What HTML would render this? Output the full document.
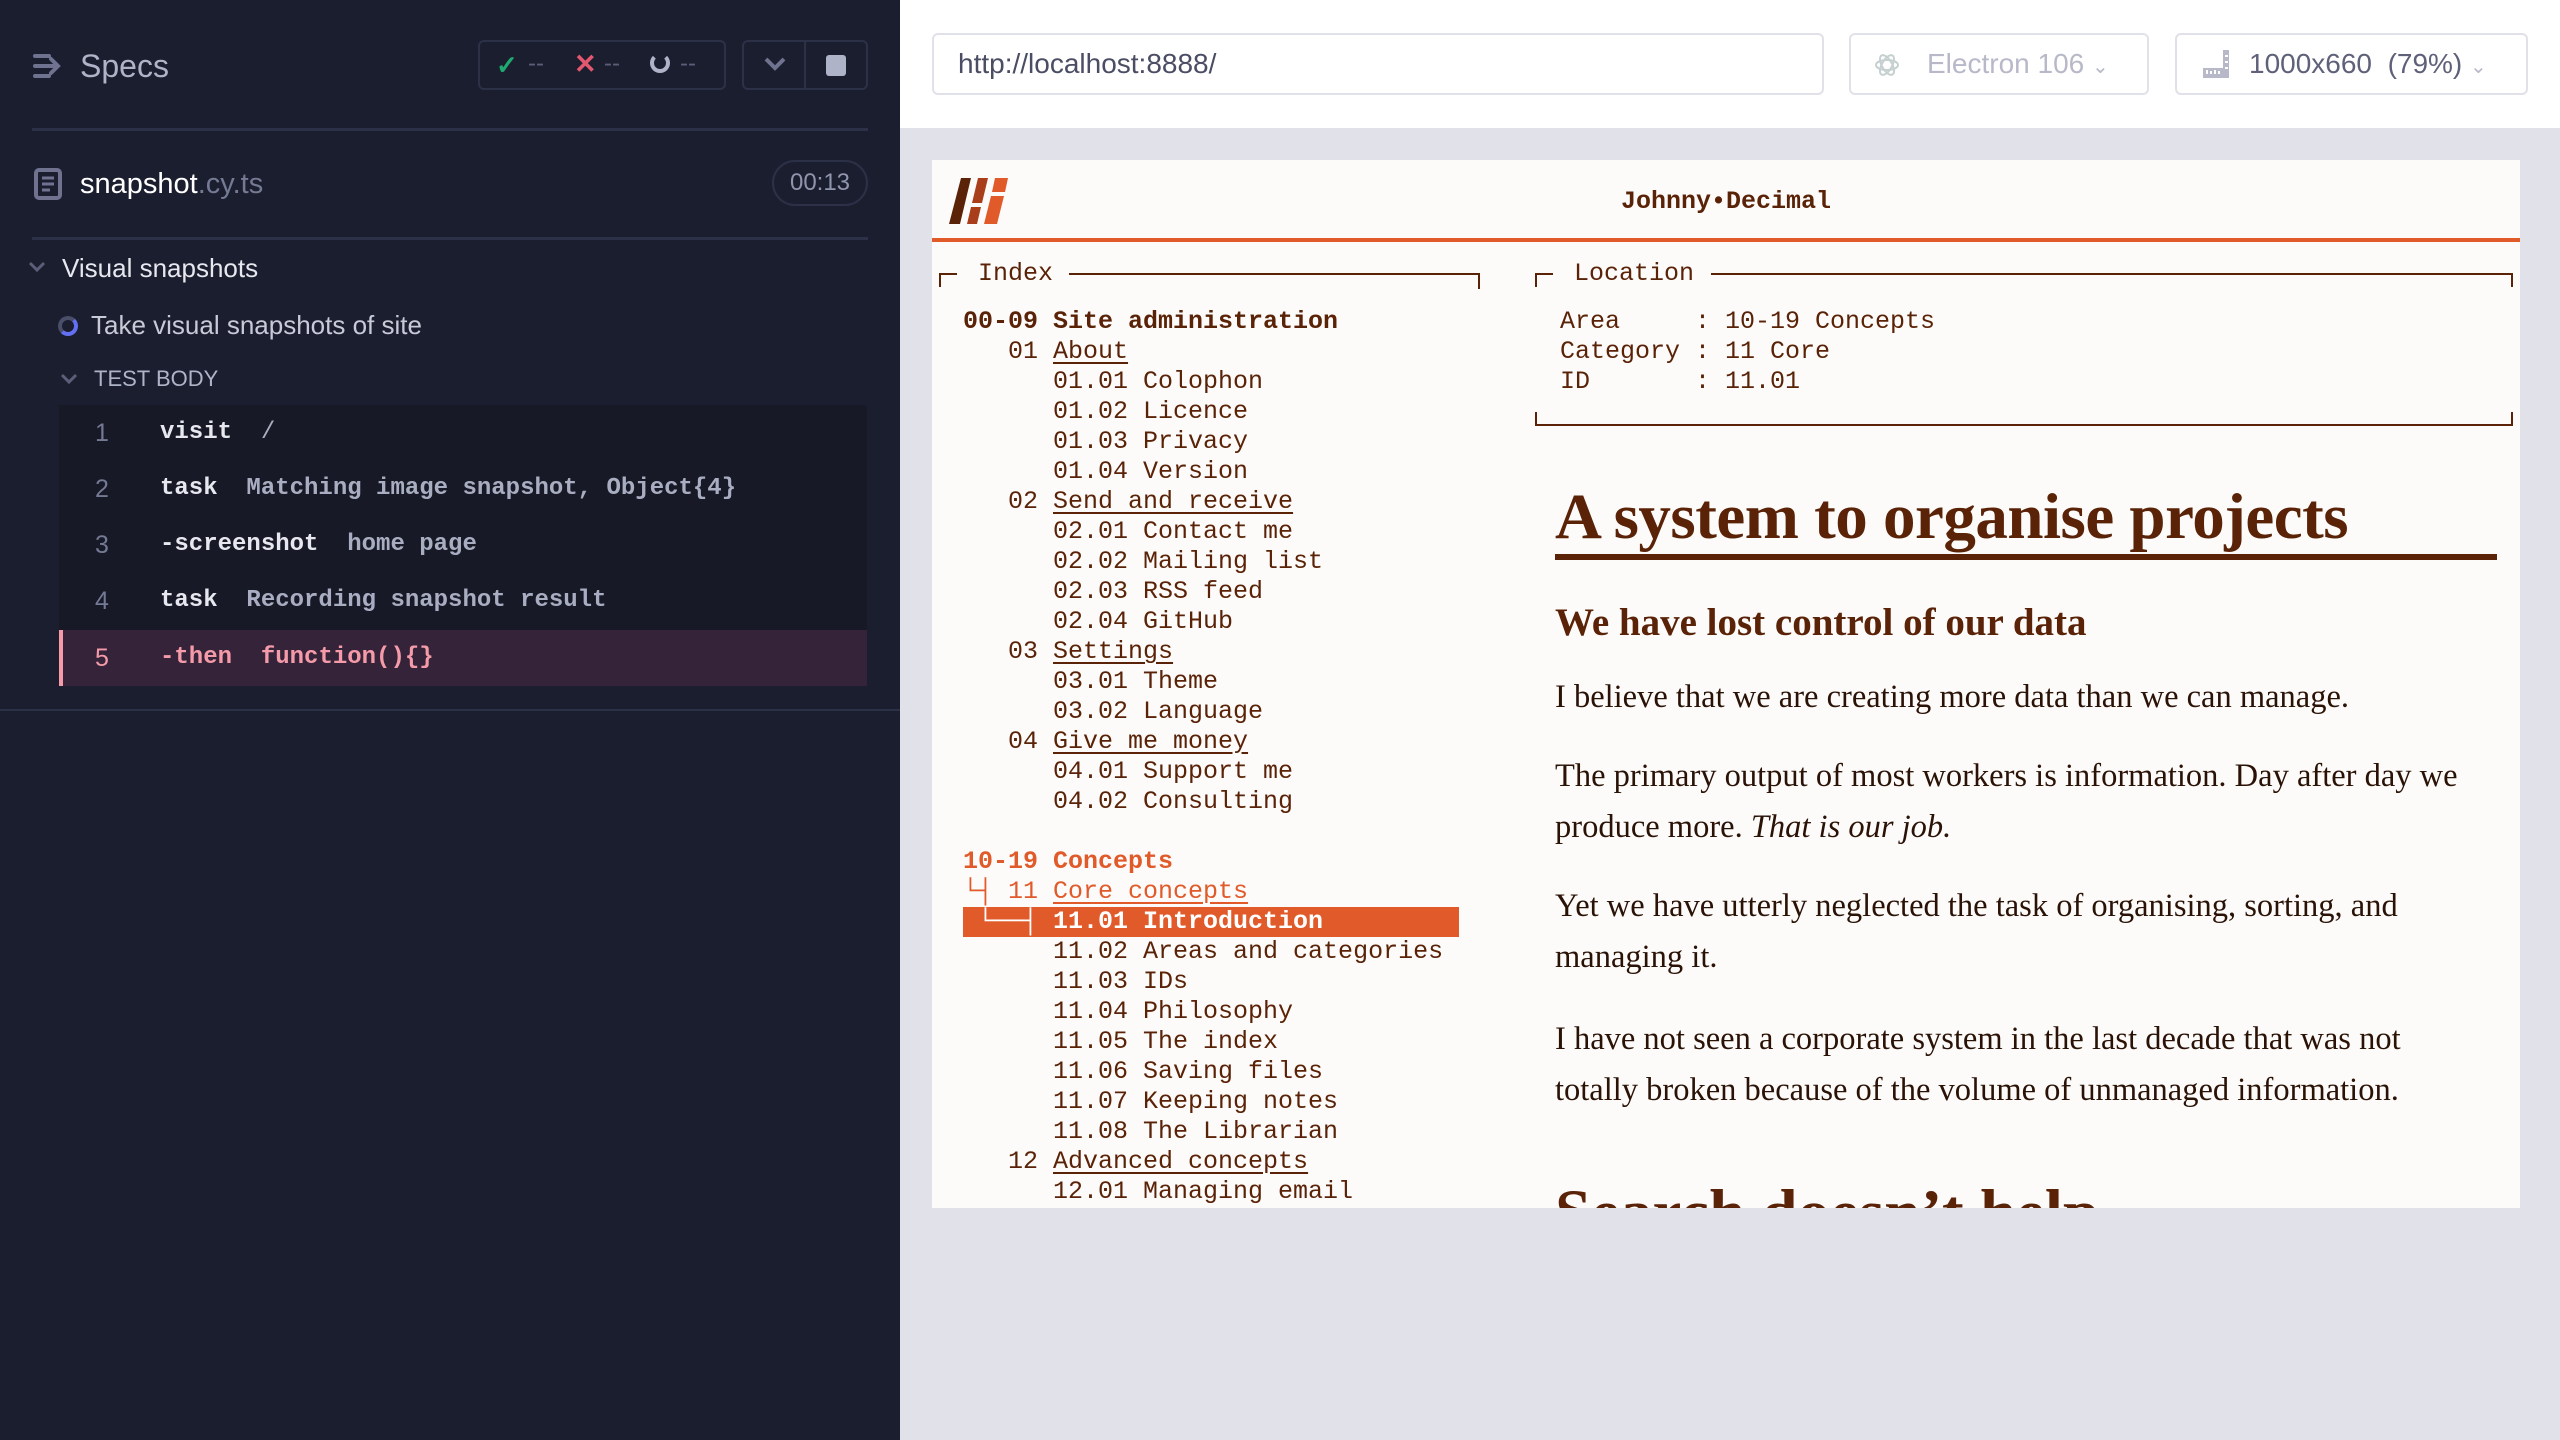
<!DOCTYPE html>
<html><head><meta charset="utf-8"><style>
*{margin:0;padding:0;box-sizing:border-box}
body{width:2560px;height:1440px;overflow:hidden;background:#e1e1ea;font-family:"Liberation Sans",sans-serif;position:relative}
.l{position:absolute;left:0;top:0;width:900px;height:1440px;background:#1b1e2e}
.a{position:absolute;white-space:pre}
.hr{position:absolute;left:32px;width:836px;height:3px;background:#2d3148}
.btn{position:absolute;border:2px solid #2d3148;border-radius:6px}
.code{position:absolute;left:59px;top:405px;width:808px;height:281px;background:#171926}
.row{position:absolute;left:0;width:808px;height:56px;font-family:"Liberation Mono",monospace;font-size:24px;line-height:56px;color:#e7e8ef;white-space:pre}
.row .n{position:absolute;left:36px;color:#747994;font-family:"Liberation Sans",sans-serif;font-size:25px}
.row .c{position:absolute;left:101px;font-weight:bold}
.row .c span{font-weight:bold;color:#a9adc1}
.top{position:absolute;left:900px;top:0;width:1660px;height:128px;background:#fff}
.box{position:absolute;top:33px;height:62px;border:2px solid #e1e1ea;border-radius:6px;background:#fff;font-size:28px;line-height:58px;color:#5e6179;white-space:pre}
.pg{position:absolute;left:932px;top:160px;width:1588px;height:1048px;background:#fcfbf9;overflow:hidden}
.m{font-family:"Liberation Mono",monospace;font-size:25px;color:#5a2308}
.ix{position:absolute;left:31px;top:147px;line-height:30px}
.ix div{white-space:pre;height:30px}
.u{text-decoration:underline;text-underline-offset:4px}
.b{font-weight:bold}
.o{color:#e05a2a}
.s{font-family:"Liberation Serif",serif;position:absolute;left:623px;color:#2b1206;white-space:nowrap}
.ln{position:absolute;background:#5a2308}
</style></head><body>
<div class="l">
 <svg class="a" style="left:32px;top:52px" width="32" height="28" viewBox="0 0 32 28"><g stroke="#6f7390" stroke-width="4" stroke-linecap="round" fill="none"><path d="M3 4h14M3 14h22M3 24h14M19 7l7 7-7 7"/></g></svg>
 <div class="a" style="left:80px;top:48px;font-size:32px;color:#afb3c7">Specs</div>
 <div class="btn" style="left:478px;top:40px;width:248px;height:50px"></div>
 <div class="a" style="left:496px;top:50px;font-size:26px;color:#1fa971;font-weight:bold">✓</div><div class="a" style="left:528px;top:50px;font-size:24px;color:#5a5e78">--</div>
 <div class="a" style="left:574px;top:49px;font-size:27px;color:#e45770;font-weight:bold">✕</div><div class="a" style="left:604px;top:50px;font-size:24px;color:#5a5e78">--</div>
 <div class="a" style="left:650px;top:53px;width:20px;height:20px;border:4px solid #afb3c7;border-top-color:transparent;border-radius:50%"></div><div class="a" style="left:680px;top:50px;font-size:24px;color:#5a5e78">--</div>
 <div class="btn" style="left:742px;top:40px;width:126px;height:50px"></div>
 <div class="a" style="left:804px;top:41px;width:2px;height:48px;background:#2d3148"></div>
 <svg class="a" style="left:763px;top:55px" width="24" height="18"><path d="M3 4l9 9 9-9" stroke="#6f7390" stroke-width="4" fill="none"/></svg>
 <div class="a" style="left:826px;top:55px;width:20px;height:21px;background:#afb3c7;border-radius:3px"></div>
 <div class="hr" style="top:128px"></div>
 <svg class="a" style="left:34px;top:168px" width="28" height="32"><rect x="2" y="2" width="24" height="28" rx="3" fill="none" stroke="#6f7390" stroke-width="4"/><path d="M8 10h12M8 16h12M8 22h8" stroke="#6f7390" stroke-width="3"/></svg>
 <div class="a" style="left:80px;top:168px;font-size:29px;color:#fff">snapshot<span style="color:#747994">.cy.ts</span></div>
 <div class="a" style="left:772px;top:160px;width:96px;height:46px;border:2px solid #2d3148;border-radius:23px;font-size:24px;line-height:42px;text-align:center;color:#9095ad">00:13</div>
 <div class="hr" style="top:237px"></div>
 <svg class="a" style="left:28px;top:260px" width="18" height="14"><path d="M2 3l7 7 7-7" stroke="#5a5e78" stroke-width="3" fill="none"/></svg>
 <div class="a" style="left:62px;top:253px;font-size:26px;color:#e7e8ef">Visual snapshots</div>
 <div class="a" style="left:58px;top:316px;width:20px;height:20px;border:4px solid #4a4e68;border-right-color:#6470f3;border-bottom-color:#6470f3;border-radius:50%"></div>
 <div class="a" style="left:91px;top:310px;font-size:26px;color:#c8cad8">Take visual snapshots of site</div>
 <svg class="a" style="left:60px;top:372px" width="18" height="14"><path d="M2 3l7 7 7-7" stroke="#5a5e78" stroke-width="3" fill="none"/></svg>
 <div class="a" style="left:94px;top:366px;font-size:22px;color:#afb3c7">TEST BODY</div>
 <div class="code">
  <div class="row" style="top:0"><span class="n">1</span><span class="c">visit  <span style="font-weight:normal;color:#a9adc1">/</span></span></div>
  <div class="row" style="top:56px"><span class="n">2</span><span class="c">task  <span>Matching image snapshot, Object{4}</span></span></div>
  <div class="row" style="top:112px"><span class="n">3</span><span class="c">-screenshot  <span>home page</span></span></div>
  <div class="row" style="top:168px"><span class="n">4</span><span class="c">task  <span>Recording snapshot result</span></span></div>
  <div class="row" style="top:225px;background:#35233a;border-left:4px solid #f59aa9;color:#f59aa9"><span class="n" style="left:32px;color:#f59aa9">5</span><span class="c" style="left:97px">-then  <span style="color:#f59aa9">function(){}</span></span></div>
 </div>
 <div class="a" style="left:0;top:709px;width:900px;height:2px;background:#2d3148"></div>
</div>
<div class="top">
 <div class="box" style="left:32px;width:892px;padding-left:24px;color:#4a4d63">http://localhost:8888/</div>
 <div class="box" style="left:949px;width:300px;padding-left:76px;color:#b7b9c9">Electron 106 <span style="font-size:20px">⌄</span></div>
 <svg class="a" style="left:974px;top:50px" width="26" height="30"><g fill="none" stroke="#c6d0d0" stroke-width="2"><ellipse cx="13" cy="15" rx="11" ry="5"/><ellipse cx="13" cy="15" rx="11" ry="5" transform="rotate(60 13 15)"/><ellipse cx="13" cy="15" rx="11" ry="5" transform="rotate(-60 13 15)"/></g></svg>
 <div class="box" style="left:1275px;width:353px;padding-left:72px;color:#5e6179">1000x660  (79%) <span style="font-size:20px;color:#b7b9c9">⌄</span></div>
 <svg class="a" style="left:1301px;top:48px" width="30" height="32"><path d="M22 2h6v28H2v-10h20z" fill="#b7b9c9"/><path d="M6 26v-4M10 26v-3M14 26v-4M18 26v-3M24 8h3M24 14h3M24 20h3" stroke="#fff" stroke-width="2"/></svg>
</div>
<div class="pg">
 <svg class="a" style="left:16px;top:16px" width="66" height="50"><polygon points="13,2 23,2 12,48 1,48" fill="#5a2308"/><polygon points="30,2 40,2 34,27 24,27" fill="#a83f1a"/><polygon points="23,31 33,31 29,48 19,48" fill="#a83f1a"/><polygon points="47,2 60,2 57,16 44,16" fill="#e05a2a"/><polygon points="43,20 56,20 49,48 36,48" fill="#e05a2a"/></svg>
 <div class="a m b" style="left:0;width:1588px;text-align:center;top:27px;font-size:25px">Johnny•Decimal</div>
 <div class="a" style="left:0;top:78px;width:1588px;height:4px;background:#e05a2a"></div>
 <!-- Index frame -->
 <div class="ln" style="left:7px;top:113px;width:18px;height:2px"></div>
 <div class="ln" style="left:7px;top:113px;width:2px;height:14px"></div>
 <div class="a m" style="left:46px;top:99px">Index</div>
 <div class="ln" style="left:137px;top:113px;width:411px;height:2px"></div>
 <div class="ln" style="left:546px;top:113px;width:2px;height:16px"></div>
 <!-- Location frame -->
 <div class="ln" style="left:603px;top:113px;width:18px;height:2px"></div>
 <div class="ln" style="left:603px;top:113px;width:2px;height:14px"></div>
 <div class="a m" style="left:642px;top:99px">Location</div>
 <div class="ln" style="left:779px;top:113px;width:802px;height:2px"></div>
 <div class="ln" style="left:1579px;top:113px;width:2px;height:14px"></div>
 <div class="ln" style="left:603px;top:252px;width:2px;height:14px"></div>
 <div class="ln" style="left:1579px;top:252px;width:2px;height:14px"></div>
 <div class="ln" style="left:603px;top:264px;width:978px;height:2px"></div>
 <div class="a m" style="left:628px;top:147px;line-height:30px">Area     : 10-19 Concepts
Category : 11 Core
ID       : 11.01</div>
 <div class="ix m">
<div class="b">00-09 Site administration</div>
<div>   01 <span class="u">About</span></div>
<div>      01.01 Colophon</div>
<div>      01.02 Licence</div>
<div>      01.03 Privacy</div>
<div>      01.04 Version</div>
<div>   02 <span class="u">Send and receive</span></div>
<div>      02.01 Contact me</div>
<div>      02.02 Mailing list</div>
<div>      02.03 RSS feed</div>
<div>      02.04 GitHub</div>
<div>   03 <span class="u">Settings</span></div>
<div>      03.01 Theme</div>
<div>      03.02 Language</div>
<div>   04 <span class="u">Give me money</span></div>
<div>      04.01 Support me</div>
<div>      04.02 Consulting</div>
<div></div>
<div class="b o">10-19 Concepts</div>
<div class="o">└┤ 11 <span class="u">Core concepts</span></div>
<div style="background:#e05a2a;color:#fff;width:496px;font-weight:bold">&nbsp;└──┤ 11.01 Introduction</div>
<div>      11.02 Areas and categories</div>
<div>      11.03 IDs</div>
<div>      11.04 Philosophy</div>
<div>      11.05 The index</div>
<div>      11.06 Saving files</div>
<div>      11.07 Keeping notes</div>
<div>      11.08 The Librarian</div>
<div>   12 <span class="u">Advanced concepts</span></div>
<div>      12.01 Managing email</div>
 </div>
 <div class="s" style="top:320px;font-size:65px;font-weight:bold;color:#5a2308;letter-spacing:-0.5px">A system to organise projects</div>
 <div class="a" style="left:623px;top:394px;width:942px;height:6px;background:#5a2308"></div>
 <div class="s" style="top:440px;font-size:39px;font-weight:bold;color:#5a2308">We have lost control of our data</div>
 <div class="s" style="top:512px;font-size:32.5px;line-height:51px">I believe that we are creating more data than we can manage.</div>
 <div class="s" style="top:591px;font-size:32.5px;line-height:51px">The primary output of most workers is information. Day after day we<br>produce more. <i>That is our job.</i></div>
 <div class="s" style="top:721px;font-size:32.5px;line-height:51px">Yet we have utterly neglected the task of organising, sorting, and<br>managing it.</div>
 <div class="s" style="top:854px;font-size:32.5px;line-height:51px">I have not seen a corporate system in the last decade that was not<br>totally broken because of the volume of unmanaged information.</div>
 <div class="s" style="top:1016px;font-size:65px;font-weight:bold;color:#5a2308">Search doesn’t help</div>
</div>
</body></html>
